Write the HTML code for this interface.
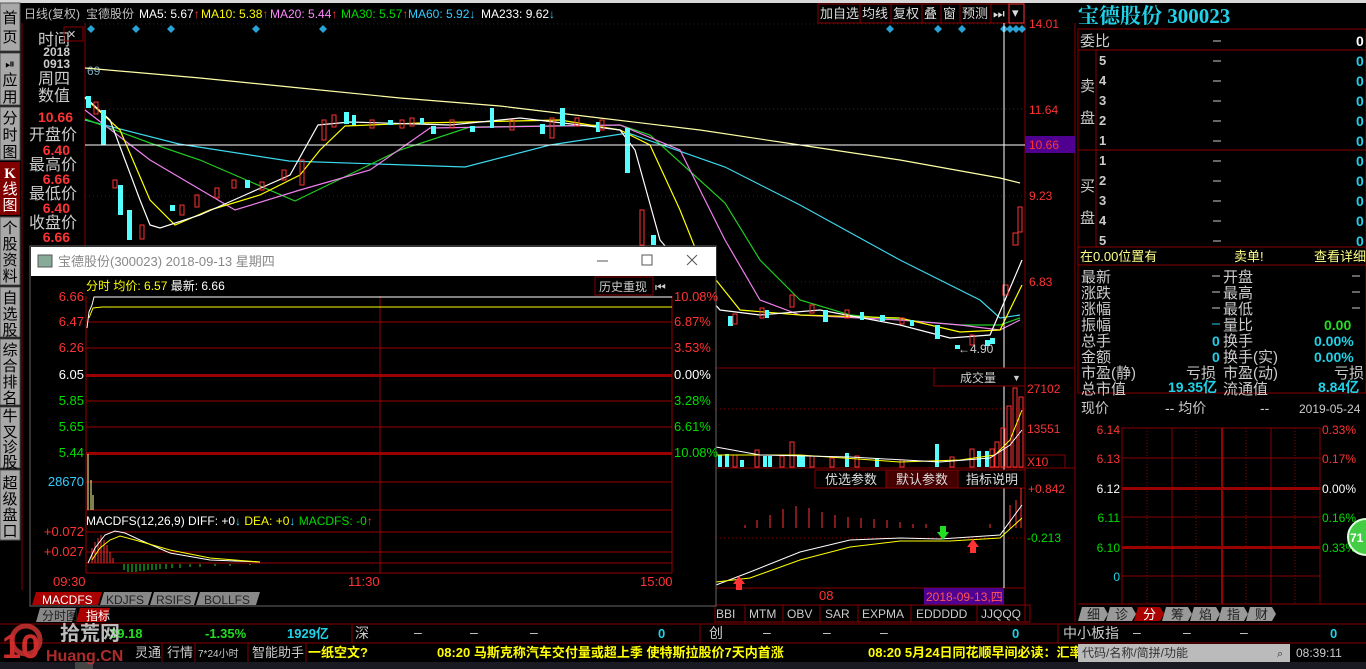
<!DOCTYPE html>
<html><head><meta charset="utf-8"><style>
html,body{margin:0;padding:0;background:#000;overflow:hidden}
svg{display:block;font-family:"Liberation Sans","Noto Sans CJK SC",sans-serif;font-size:13px}
</style></head><body>
<svg width="1366" height="669" viewBox="0 0 1366 669" xmlns="http://www.w3.org/2000/svg">
<rect width="1366" height="669" fill="#000"/>
<rect x="0" y="0" width="1366" height="3" fill="#d8d8d8"/>
<!-- left sidebar -->
<g fill="#a8a8a8" stroke="#555">
<rect x="0" y="3" width="20" height="48"/><rect x="0" y="53" width="20" height="52"/><rect x="0" y="107" width="20" height="53"/>
<rect x="0" y="217" width="20" height="68"/><rect x="0" y="287" width="20" height="50"/><rect x="0" y="339" width="20" height="66"/><rect x="0" y="407" width="20" height="61"/><rect x="0" y="470" width="20" height="70"/>
</g>
<rect x="0" y="162" width="20" height="53" fill="#800000"/>
<g fill="#000" font-size="15" text-anchor="middle">
<text x="10" y="23">首</text><text x="10" y="42">页</text>
<text x="10" y="68" font-size="12">⏯</text><text x="10" y="85">应</text><text x="10" y="102">用</text>
<text x="10" y="123">分</text><text x="10" y="140">时</text><text x="10" y="157">图</text>
<text x="10" y="233">个</text><text x="10" y="249">股</text><text x="10" y="265">资</text><text x="10" y="281">料</text>
<text x="10" y="303">自</text><text x="10" y="319">选</text><text x="10" y="335">股</text>
<text x="10" y="355">综</text><text x="10" y="371">合</text><text x="10" y="387">排</text><text x="10" y="403">名</text>
<text x="10" y="421">牛</text><text x="10" y="437">叉</text><text x="10" y="452">诊</text><text x="10" y="467">股</text>
<text x="10" y="488">超</text><text x="10" y="504">级</text><text x="10" y="520">盘</text><text x="10" y="536">口</text>
</g>
<g fill="#fff" text-anchor="middle" font-size="15"><text x="10" y="178" font-family="Liberation Serif" font-weight="bold">K</text><text x="10" y="194">线</text><text x="10" y="210">图</text></g>
<!-- header -->
<g font-size="12">
<text x="24" y="18" fill="#c0c0c0">日线(复权)</text><text x="86" y="18" fill="#c0c0c0">宝德股份</text>
<text x="139" y="18" fill="#fff">MA5: 5.67<tspan fill="#f33">↑</tspan></text>
<text x="201" y="18" fill="#ff0">MA10: 5.38<tspan fill="#f33">↑</tspan></text>
<text x="270" y="18" fill="#f8f">MA20: 5.44<tspan fill="#f33">↑</tspan></text>
<text x="341" y="18" fill="#0d0">MA30: 5.57<tspan fill="#f33">↑</tspan></text>
<text x="408" y="18" fill="#3cf">MA60: 5.92<tspan fill="#3cf">↓</tspan></text>
<text x="481" y="18" fill="#fff">MA233: 9.62<tspan fill="#3cf">↓</tspan></text>
</g>
<g stroke="#800" fill="none"><rect x="818" y="4" width="42" height="19"/><rect x="860" y="4" width="31" height="19"/><rect x="891" y="4" width="31" height="19"/><rect x="922" y="4" width="19" height="19"/><rect x="941" y="4" width="19" height="19"/><rect x="960" y="4" width="31" height="19"/><rect x="991" y="4" width="18" height="19"/><rect x="1009" y="4" width="15" height="19" stroke="#f33"/></g>
<g fill="#ddd" font-size="13"><text x="820" y="18">加自选</text><text x="862" y="18">均线</text><text x="893" y="18">复权</text><text x="924" y="18">叠</text><text x="943" y="18">窗</text><text x="962" y="18">预测</text><text x="993" y="18">⏭</text><text x="1012" y="17">▾</text></g>
<!-- main chart frame -->
<line x1="22" y1="23" x2="22" y2="590" stroke="#800"/>
<line x1="85" y1="23" x2="85" y2="590" stroke="#800"/>
<line x1="1025" y1="23" x2="1025" y2="622" stroke="#800"/>
<line x1="1075" y1="23" x2="1075" y2="622" stroke="#800"/>
<g stroke="#800" stroke-dasharray="1,3"><line x1="85" y1="24" x2="1025" y2="24"/><line x1="85" y1="109" x2="1025" y2="109"/><line x1="85" y1="196" x2="1025" y2="196"/><line x1="85" y1="282" x2="1025" y2="282"/><line x1="716" y1="409" x2="1025" y2="409"/><line x1="716" y1="538" x2="1025" y2="538"/></g>
<line x1="716" y1="368" x2="1075" y2="368" stroke="#800"/>
<line x1="716" y1="468" x2="1075" y2="468" stroke="#800"/>
<line x1="716" y1="588" x2="1025" y2="588" stroke="#800"/>
<g fill="#29a3d6">
<path d="M91 25l4 4-4 4-4-4z"/><path d="M136 25l4 4-4 4-4-4z"/><path d="M171 25l4 4-4 4-4-4z"/><path d="M256 25l4 4-4 4-4-4z"/><path d="M323 25l4 4-4 4-4-4z"/>
<path d="M890 25l4 4-4 4-4-4z"/><path d="M938 25l4 4-4 4-4-4z"/><path d="M962 25l4 4-4 4-4-4z"/><path d="M1004 25l4 4-4 4-4-4z"/><path d="M1010 25l4 4-4 4-4-4z"/><path d="M1016 25l4 4-4 4-4-4z"/><path d="M1022 25l4 4-4 4-4-4z"/>
</g>
<text x="87" y="75" fill="#7ab" font-size="12">69</text>
<!-- left info column -->
<g text-anchor="end" font-size="16">
<text x="70" y="45" fill="#ccc">时间</text><text x="70" y="56" fill="#ccc" font-size="12" font-weight="bold">2018</text><text x="70" y="68" fill="#ccc" font-size="12" font-weight="bold">0913</text>
<text x="70" y="84" fill="#ccc">周四</text><text x="70" y="101" fill="#ccc">数值</text>
<text x="73" y="122" fill="#f33" font-size="14" font-weight="bold">10.66</text>
<text x="77" y="140" fill="#ccc">开盘价</text><text x="70" y="155" fill="#f33" font-size="14" font-weight="bold">6.40</text>
<text x="77" y="170" fill="#ccc">最高价</text><text x="70" y="184" fill="#f33" font-size="14" font-weight="bold">6.66</text>
<text x="77" y="199" fill="#ccc">最低价</text><text x="70" y="213" fill="#f33" font-size="14" font-weight="bold">6.40</text>
<text x="77" y="228" fill="#ccc">收盘价</text><text x="70" y="242" fill="#f33" font-size="14" font-weight="bold">6.66</text>
</g>
<rect x="64" y="27" width="19" height="14" fill="none" stroke="#800"/><text x="67" y="38" fill="#ccc" font-size="11">✕</text>
<!-- MA lines -->
<g fill="none" stroke-width="1.2">
<polyline stroke="#ffffa8" points="85,68 200,78 300,88 400,98 500,106 600,118 700,130 800,145 900,160 1000,178 1020,183"/>
<polyline stroke="#3cd8ec" points="85,120 179,144 289,161 465,167 550,145 628,133 725,167 800,205 900,260 980,300 1000,318 1020,315"/>
<polyline stroke="#22cc22" points="85,119 150,143 200,160 295,201 400,150 470,127 620,125 650,135 725,203 760,260 800,300 850,315 960,325 1000,325 1020,318"/>
<polyline stroke="#f080f0" points="85,110 150,160 235,210 300,190 370,170 430,128 620,125 680,150 725,240 760,300 800,315 900,320 960,325 1000,330 1020,320"/>
<polyline stroke="#ffff00" points="85,98 120,130 150,200 175,225 210,210 260,195 300,175 320,150 345,126 420,123 560,120 620,130 650,145 680,210 700,260 740,310 800,315 900,318 960,332 1000,330 1022,285"/>
<polyline stroke="#fff" points="85,97 110,120 140,200 150,225 160,228 200,215 245,195 290,175 318,125 350,122 450,125 520,118 580,125 620,130 635,150 660,240 720,310 760,315 820,310 900,325 950,338 990,335 1005,300 1022,260"/>
</g>
<g fill="#5ff">
<rect x="86" y="96" width="5" height="12"/><rect x="101" y="110" width="5" height="35"/><rect x="118" y="185" width="5" height="30"/><rect x="127" y="210" width="5" height="30"/><rect x="170" y="205" width="5" height="6"/><rect x="245" y="180" width="5" height="8"/><rect x="344" y="112" width="5" height="12"/><rect x="388" y="120" width="5" height="5"/><rect x="431" y="126" width="5" height="8"/><rect x="470" y="126" width="5" height="6"/><rect x="540" y="124" width="5" height="10"/><rect x="560" y="108" width="5" height="18"/><rect x="625" y="128" width="5" height="45"/><rect x="651" y="235" width="5" height="10"/><rect x="728" y="316" width="5" height="10"/><rect x="823" y="310" width="5" height="12"/><rect x="880" y="315" width="5" height="6"/><rect x="935" y="325" width="5" height="14"/><rect x="955" y="345" width="5" height="4"/><rect x="985" y="340" width="5" height="6"/><rect x="990" y="338" width="5" height="6"/>
<rect x="352" y="115" width="4" height="10"/><rect x="420" y="118" width="4" height="6"/><rect x="490" y="108" width="4" height="20"/><rect x="596" y="122" width="4" height="10"/><rect x="765" y="310" width="4" height="8"/><rect x="860" y="312" width="4" height="8"/><rect x="910" y="320" width="4" height="6"/></g>
<g fill="none" stroke="#f33">
<rect x="94" y="102" width="4" height="12"/><rect x="113" y="180" width="4" height="8"/><rect x="140" y="225" width="4" height="14"/><rect x="180" y="205" width="4" height="10"/><rect x="195" y="195" width="4" height="12"/><rect x="215" y="188" width="4" height="10"/><rect x="232" y="180" width="4" height="8"/><rect x="300" y="160" width="4" height="25"/><rect x="322" y="120" width="4" height="20"/><rect x="332" y="115" width="4" height="12"/><rect x="370" y="120" width="4" height="8"/><rect x="400" y="120" width="4" height="8"/><rect x="450" y="120" width="4" height="8"/><rect x="510" y="120" width="4" height="10"/><rect x="550" y="118" width="4" height="20"/><rect x="575" y="118" width="4" height="8"/><rect x="640" y="210" width="4" height="35"/><rect x="733" y="314" width="4" height="10"/><rect x="760" y="308" width="4" height="10"/><rect x="790" y="295" width="4" height="12"/><rect x="810" y="305" width="4" height="8"/><rect x="845" y="310" width="4" height="8"/><rect x="900" y="318" width="4" height="6"/><rect x="970" y="335" width="4" height="10"/><rect x="1003" y="285" width="5" height="10"/><rect x="1013" y="233" width="5" height="12"/><rect x="1018" y="207" width="4" height="25"/>
<rect x="260" y="182" width="4" height="8"/><rect x="282" y="170" width="4" height="10"/><rect x="410" y="118" width="4" height="8"/><rect x="600" y="120" width="4" height="10"/></g>
<text x="958" y="353" fill="#ccc" font-size="12">←4.90</text>
<line x1="85" y1="145" x2="1025" y2="145" stroke="#fff"/>
<line x1="1004" y1="23" x2="1004" y2="588" stroke="#fff"/>
<g fill="#f33" font-size="12"><text x="1029" y="28">14.01</text><text x="1029" y="114">11.64</text><text x="1029" y="200">9.23</text><text x="1029" y="286">6.83</text><text x="1027" y="393">27102</text><text x="1027" y="433">13551</text><text x="1027" y="466">X10</text><text x="1028" y="493">+0.842</text></g>
<rect x="1025" y="136" width="50" height="17" fill="#500090"/><text x="1029" y="149" fill="#f33" font-size="12">10.66</text>
<text x="1027" y="542" fill="#0d0" font-size="12">-0.213</text>
<!-- volume pane -->
<rect x="934" y="368" width="91" height="18" fill="#000" stroke="#800"/><text x="960" y="382" fill="#ccc" font-size="12">成交量</text><text x="1012" y="381" fill="#ccc" font-size="9">▼</text>
<rect x="1025" y="455" width="40" height="13" fill="none" stroke="#800"/>
<g fill="#5ff"><rect x="718" y="455" width="4" height="12"/><rect x="725" y="454" width="4" height="13"/><rect x="740" y="460" width="4" height="7"/><rect x="763" y="456" width="4" height="11"/><rect x="768" y="456" width="4" height="11"/><rect x="797" y="455" width="4" height="12"/><rect x="801" y="455" width="4" height="12"/><rect x="845" y="453" width="4" height="14"/><rect x="875" y="458" width="4" height="9"/><rect x="935" y="444" width="4" height="23"/><rect x="977" y="451" width="4" height="16"/><rect x="985" y="451" width="4" height="16"/></g>
<g fill="none" stroke="#f33"><rect x="733" y="455" width="4" height="12"/><rect x="755" y="450" width="4" height="17"/><rect x="780" y="456" width="4" height="11"/><rect x="790" y="442" width="4" height="25"/><rect x="810" y="456" width="4" height="11"/><rect x="830" y="458" width="4" height="9"/><rect x="855" y="456" width="4" height="11"/><rect x="900" y="460" width="4" height="7"/><rect x="950" y="457" width="4" height="10"/><rect x="970" y="449" width="4" height="18"/><rect x="990" y="449" width="4" height="18"/><rect x="995" y="442" width="4" height="25"/><rect x="1001" y="428" width="4" height="39"/><rect x="1007" y="406" width="4" height="61"/><rect x="1013" y="388" width="4" height="79"/><rect x="1019" y="397" width="4" height="70"/></g>
<polyline fill="none" stroke="#ff0" points="716,455 760,455 800,455 900,462 960,460 995,455 1010,440 1022,410"/>
<polyline fill="none" stroke="#fff" points="716,447 760,455 850,457 940,462 990,458 1010,445 1022,430"/>
<!-- macd pane -->
<g stroke="#800" fill="#000"><rect x="815" y="470" width="71" height="18"/><rect x="886" y="470" width="72" height="18" fill="#400"/><rect x="958" y="470" width="67" height="18"/></g>
<g fill="#ddd" font-size="13"><text x="825" y="484">优选参数</text><text x="896" y="484">默认参数</text><text x="966" y="484">指标说明</text></g>
<g stroke="#f33"><line x1="745" y1="525" x2="745" y2="528"/><line x1="757" y1="520" x2="757" y2="528"/><line x1="770" y1="515" x2="770" y2="528"/><line x1="783" y1="509" x2="783" y2="528"/><line x1="796" y1="506" x2="796" y2="528"/><line x1="809" y1="508" x2="809" y2="528"/><line x1="822" y1="512" x2="822" y2="528"/><line x1="835" y1="515" x2="835" y2="528"/><line x1="848" y1="517" x2="848" y2="528"/><line x1="861" y1="518" x2="861" y2="528"/><line x1="874" y1="519" x2="874" y2="528"/><line x1="887" y1="520" x2="887" y2="528"/><line x1="900" y1="522" x2="900" y2="528"/><line x1="913" y1="524" x2="913" y2="528"/><line x1="926" y1="524" x2="926" y2="528"/><line x1="990" y1="524" x2="990" y2="528"/><line x1="1010" y1="505" x2="1010" y2="528"/><line x1="1016" y1="500" x2="1016" y2="528"/><line x1="1021" y1="488" x2="1021" y2="528"/></g>
<polyline fill="none" stroke="#fff" points="716,585 750,572 800,552 850,540 900,538 940,539 1000,535 1022,505"/>
<polyline fill="none" stroke="#ff0" points="716,582 750,578 800,560 850,547 900,541 950,541 1000,538 1022,518"/>
<path d="M940 526h6v6h3l-6 8-6-8h3z" fill="#2d2"/>
<path d="M970 553h6v-6h3l-6-8-6 8h3z" fill="#f33"/>
<path d="M736 590h6v-6h3l-6-8-6 8h3z" fill="#f33"/>
<text x="819" y="600" fill="#f33" font-size="13">08</text>
<rect x="924" y="588" width="80" height="17" fill="#500090"/><text x="926" y="601" fill="#f55" font-size="12">2018-09-13,四</text>
<g stroke="#800" fill="none"><rect x="715" y="605" width="30" height="17"/><rect x="745" y="605" width="38" height="17"/><rect x="783" y="605" width="37" height="17"/><rect x="820" y="605" width="38" height="17"/><rect x="858" y="605" width="53" height="17"/><rect x="911" y="605" width="66" height="17"/><rect x="977" y="605" width="53" height="17"/></g>
<g fill="#ccc" font-size="12"><text x="716" y="618">BBI</text><text x="749" y="618">MTM</text><text x="787" y="618">OBV</text><text x="825" y="618">SAR</text><text x="862" y="618">EXPMA</text><text x="916" y="618">EDDDDD</text><text x="981" y="618">JJQQQ</text></g>
<!-- popup window -->
<rect x="30" y="246" width="686" height="360" fill="#000" stroke="#666"/>
<rect x="31" y="247" width="685" height="29" fill="#fff"/>
<rect x="38" y="255" width="14" height="12" fill="#8a9" stroke="#555"/>
<text x="58" y="266" fill="#888" font-size="13">宝德股份(300023) 2018-09-13 星期四</text>
<line x1="597" y1="261" x2="608" y2="261" stroke="#555"/><rect x="642" y="255" width="10" height="10" fill="none" stroke="#555"/><path d="M687 255l10 10M697 255l-10 10" stroke="#555"/>
<text x="86" y="290" font-size="12"><tspan fill="#ff0">分时 均价: </tspan><tspan fill="#ff0">6.57 </tspan><tspan fill="#fff">最新: 6.66</tspan></text>
<rect x="595" y="277" width="58" height="18" fill="none" stroke="#800"/><text x="599" y="291" fill="#ccc" font-size="12">历史重现</text><text x="655" y="291" fill="#ccc" font-size="12">⏮</text>
<g stroke="#900"><line x1="86" y1="322" x2="672" y2="322"/><line x1="86" y1="348" x2="672" y2="348"/><line x1="86" y1="401" x2="672" y2="401"/><line x1="86" y1="427" x2="672" y2="427"/><line x1="86" y1="482" x2="672" y2="482"/><line x1="86" y1="510" x2="672" y2="510"/><line x1="86" y1="532" x2="672" y2="532"/><line x1="86" y1="552" x2="672" y2="552"/><line x1="86" y1="563" x2="672" y2="563"/><line x1="86" y1="573" x2="672" y2="573"/><line x1="86" y1="296" x2="86" y2="573"/><line x1="672" y1="296" x2="672" y2="573"/><line x1="380" y1="296" x2="380" y2="573"/></g>
<rect x="86" y="374" width="586" height="3" fill="#900"/><rect x="86" y="452" width="586" height="3" fill="#900"/>
<polyline fill="none" stroke="#fff" points="87,328 89,312 92,305 94,297 672,297"/>
<polyline fill="none" stroke="#ff0" points="89,318 93,308 102,307 672,307"/>
<g stroke="#ff9"><line x1="88" y1="454" x2="88" y2="510"/><line x1="91" y1="480" x2="91" y2="510"/><line x1="93" y1="495" x2="93" y2="510"/></g>
<g fill="#f33" font-size="13" text-anchor="end"><text x="84" y="301">6.66</text><text x="84" y="326">6.47</text><text x="84" y="352">6.26</text><text x="84" y="536">+0.072</text><text x="84" y="556">+0.027</text></g>
<text x="84" y="379" fill="#fff" font-size="13" text-anchor="end">6.05</text>
<g fill="#0d0" font-size="13" text-anchor="end"><text x="84" y="405">5.85</text><text x="84" y="431">5.65</text><text x="84" y="457">5.44</text></g>
<text x="84" y="486" fill="#3cf" font-size="13" text-anchor="end">28670</text>
<g font-size="13"><text x="674" y="301" fill="#f33">10.08%</text><text x="674" y="326" fill="#f33">6.87%</text><text x="674" y="352" fill="#f33">3.53%</text><text x="674" y="379" fill="#fff">0.00%</text><text x="674" y="405" fill="#0d0">3.28%</text><text x="674" y="431" fill="#0d0">6.61%</text><text x="674" y="457" fill="#0d0">10.08%</text></g>
<text x="86" y="525" font-size="12"><tspan fill="#fff">MACDFS(12,26,9) DIFF: +0</tspan><tspan fill="#3cf">↓</tspan><tspan fill="#ff0"> DEA: +0</tspan><tspan fill="#3cf">↓</tspan><tspan fill="#0d0"> MACDFS: -0</tspan><tspan fill="#f33">↑</tspan></text>
<g stroke="#f33"><line x1="92" y1="548" x2="92" y2="563"/><line x1="95" y1="542" x2="95" y2="563"/><line x1="98" y1="538" x2="98" y2="563"/><line x1="101" y1="535" x2="101" y2="563"/><line x1="104" y1="540" x2="104" y2="563"/><line x1="107" y1="545" x2="107" y2="563"/><line x1="110" y1="552" x2="110" y2="563"/><line x1="113" y1="558" x2="113" y2="563"/></g>
<path d="M124 564v6M128 564v8M132 564v8M136 564v8M140 564v7M144 564v7M148 564v6M152 564v6M156 564v6M160 564v5M166 564v5M172 564v4M180 564v4M190 564v3M200 564v3M215 564v2M230 564v2M250 564v1" stroke="#2d2"/>
<polyline fill="none" stroke="#fff" points="88,563 95,548 105,535 115,531 125,533 140,540 170,553 210,560 260,562"/>
<polyline fill="none" stroke="#ff0" points="92,560 100,548 110,540 120,536 135,540 170,550 210,558 260,562"/>
<g fill="#f33" font-size="13"><text x="53" y="586">09:30</text><text x="348" y="586">11:30</text><text x="640" y="586">15:00</text></g>
<path d="M36 592h66l-4 13h-66z" fill="#a00"/><path d="M104 592h48l-4 13h-48z" fill="#888"/><path d="M154 592h44l-4 13h-44z" fill="#888"/><path d="M200 592h60l-4 13h-60z" fill="#888"/>
<g font-size="12"><text x="42" y="604" fill="#fff">MACDFS</text><text x="106" y="604" fill="#222">KDJFS</text><text x="156" y="604" fill="#222">RSIFS</text><text x="204" y="604" fill="#222">BOLLFS</text></g>
<path d="M40 608h36l-4 14h-36z" fill="#888"/><path d="M80 608h30l-4 14h-30z" fill="#a00"/>
<text x="42" y="620" fill="#222" font-size="12">分时图</text><text x="86" y="620" fill="#fff" font-size="12">指标</text>
<!-- right panel -->
<text x="1078" y="23" fill="#1fd2e8" font-size="21" font-weight="bold" font-family="'Liberation Serif','Noto Serif CJK SC',serif">宝德股份 300023</text>
<g stroke="#800" fill="none"><rect x="1078" y="29" width="288" height="364"/><line x1="1078" y1="50" x2="1366" y2="50"/><line x1="1078" y1="150" x2="1366" y2="150"/><line x1="1078" y1="247" x2="1366" y2="247"/><line x1="1078" y1="265" x2="1366" y2="265"/><line x1="1096" y1="50" x2="1096" y2="247"/></g>
<g fill="#ccc" font-size="15"><text x="1080" y="46">委比</text><text x="1080" y="91">卖</text><text x="1080" y="123">盘</text><text x="1080" y="191">买</text><text x="1080" y="223">盘</text></g>
<g fill="#ccc" font-size="13" font-weight="bold"><text x="1099" y="65">5</text><text x="1099" y="85">4</text><text x="1099" y="105">3</text><text x="1099" y="125">2</text><text x="1099" y="145">1</text><text x="1099" y="165">1</text><text x="1099" y="185">2</text><text x="1099" y="205">3</text><text x="1099" y="225">4</text><text x="1099" y="245">5</text></g>
<g stroke="#ccc"><path d="M1213 41h8M1213 61h8M1213 81h8M1213 101h8M1213 121h8M1213 141h8M1213 161h8M1213 181h8M1213 201h8M1213 221h8M1213 241h8"/></g>
<text x="1356" y="46" fill="#fff" font-size="14" font-weight="bold">0</text>
<g fill="#1fd2e8" font-size="14" font-weight="bold"><text x="1356" y="66">0</text><text x="1356" y="86">0</text><text x="1356" y="106">0</text><text x="1356" y="126">0</text><text x="1356" y="146">0</text><text x="1356" y="166">0</text><text x="1356" y="186">0</text><text x="1356" y="206">0</text><text x="1356" y="226">0</text><text x="1356" y="246">0</text></g>
<g fill="#ff8" font-size="13"><text x="1080" y="261">在0.00位置有</text><text x="1234" y="261">卖单!</text><text x="1314" y="261">查看详细</text></g>
<g fill="#ccc" font-size="15"><text x="1081" y="282">最新</text><text x="1081" y="298">涨跌</text><text x="1081" y="314">涨幅</text><text x="1081" y="330">振幅</text><text x="1081" y="346">总手</text><text x="1081" y="362">金额</text><text x="1081" y="378">市盈(静)</text><text x="1081" y="394">总市值</text>
<text x="1223" y="282">开盘</text><text x="1223" y="298">最高</text><text x="1223" y="314">最低</text><text x="1223" y="330">量比</text><text x="1223" y="346">换手</text><text x="1223" y="362">换手(实)</text><text x="1223" y="378">市盈(动)</text><text x="1223" y="394">流通值</text>
<text x="1186" y="378">亏损</text><text x="1334" y="378">亏损</text></g>
<g stroke="#ccc"><path d="M1212 276h8M1212 292h8M1212 308h8M1352 276h8M1352 292h8M1352 308h8"/></g><path d="M1212 324h8" stroke="#1fd2e8"/>
<g fill="#1fd2e8" font-size="14" font-weight="bold"><text x="1212" y="346">0</text><text x="1212" y="362">0</text><text x="1314" y="346">0.00%</text><text x="1314" y="362">0.00%</text><text x="1168" y="392">19.35亿</text><text x="1318" y="392">8.84亿</text></g>
<text x="1324" y="330" fill="#2d2" font-size="14" font-weight="bold">0.00</text>
<g fill="#ccc" font-size="14"><text x="1081" y="413">现价</text><text x="1165" y="413">-- 均价</text><text x="1260" y="413">--</text><text x="1299" y="413" font-size="12">2019-05-24</text></g>
<g stroke="#800" fill="none"><rect x="1122" y="428" width="198" height="176"/><line x1="1122" y1="458" x2="1320" y2="458"/><line x1="1122" y1="517" x2="1320" y2="517"/><line x1="1122" y1="576" x2="1320" y2="576"/><line x1="1172" y1="428" x2="1172" y2="604"/><line x1="1271" y1="428" x2="1271" y2="604"/></g>
<g stroke="#800" stroke-dasharray="1,2"><line x1="1147" y1="428" x2="1147" y2="604"/><line x1="1196" y1="428" x2="1196" y2="604"/><line x1="1246" y1="428" x2="1246" y2="604"/><line x1="1295" y1="428" x2="1295" y2="604"/></g>
<rect x="1122" y="487" width="198" height="3" fill="#900"/><rect x="1122" y="546" width="198" height="3" fill="#900"/><rect x="1221" y="428" width="2" height="176" fill="#900"/>
<line x1="1078" y1="604" x2="1366" y2="604" stroke="#800"/>
<g font-size="12" text-anchor="end"><text x="1120" y="434" fill="#f33">6.14</text><text x="1120" y="463" fill="#f33">6.13</text><text x="1120" y="493" fill="#fff">6.12</text><text x="1120" y="522" fill="#0d0">6.11</text><text x="1120" y="552" fill="#0d0">6.10</text><text x="1120" y="581" fill="#1fd2e8">0</text></g>
<g font-size="12"><text x="1322" y="434" fill="#f33">0.33%</text><text x="1322" y="463" fill="#f33">0.17%</text><text x="1322" y="493" fill="#fff">0.00%</text><text x="1322" y="522" fill="#0d0">0.16%</text><text x="1322" y="552" fill="#0d0">0.33%</text></g>
<circle cx="1366" cy="537" r="18" fill="#4c4" stroke="#dfd" stroke-width="2"/><text x="1350" y="542" fill="#fff" font-size="12" font-weight="bold">71</text>
<g fill="#999"><path d="M1082 607h22l4 7-4 7h-26z"/><path d="M1110 607h22l4 7-4 7h-26z"/><path d="M1166 607h22l4 7-4 7h-26z"/><path d="M1194 607h22l4 7-4 7h-26z"/><path d="M1222 607h22l4 7-4 7h-26z"/><path d="M1250 607h22l4 7-4 7h-26z"/></g>
<path d="M1138 607h22l4 7-4 7h-26z" fill="#a00"/>
<g font-size="13"><text x="1087" y="619" fill="#222">细</text><text x="1115" y="619" fill="#222">诊</text><text x="1143" y="619" fill="#fff">分</text><text x="1171" y="619" fill="#222">筹</text><text x="1199" y="619" fill="#222">焰</text><text x="1227" y="619" fill="#222">指</text><text x="1255" y="619" fill="#222">财</text></g>
<!-- index row -->
<line x1="0" y1="624" x2="1366" y2="624" stroke="#800"/><line x1="0" y1="643" x2="1366" y2="643" stroke="#800"/>
<g font-size="13" font-weight="bold"><text x="110" y="638" fill="#2d2">39.18</text><text x="205" y="638" fill="#2d2">-1.35%</text><text x="287" y="638" fill="#1fd2e8">1929亿</text><text x="658" y="638" fill="#1fd2e8">0</text><text x="1012" y="638" fill="#1fd2e8">0</text><text x="1330" y="638" fill="#1fd2e8">0</text></g>
<g stroke="#800"><line x1="352" y1="625" x2="352" y2="643"/><line x1="700" y1="625" x2="700" y2="643"/><line x1="1058" y1="625" x2="1058" y2="643"/></g>
<g fill="#ccc" font-size="14"><text x="355" y="638">深</text><text x="709" y="638">创</text><text x="1063" y="638">中小板指</text><text x="414" y="637">–</text><text x="470" y="637">–</text><text x="530" y="637">–</text><text x="763" y="637">–</text><text x="823" y="637">–</text><text x="880" y="637">–</text><text x="1133" y="637">–</text><text x="1183" y="637">–</text><text x="1240" y="637">–</text></g>
<!-- news bar -->
<g stroke="#800"><line x1="162" y1="643" x2="162" y2="662"/><line x1="195" y1="643" x2="195" y2="662"/><line x1="248" y1="643" x2="248" y2="662"/><line x1="306" y1="643" x2="306" y2="662"/></g>
<g fill="#ccc" font-size="13"><text x="135" y="657">灵通</text><text x="167" y="657">行情</text><text x="198" y="657" font-size="10">7*24小时</text><text x="252" y="657">智能助手</text></g>
<g fill="#ff0" font-size="13" font-weight="bold"><text x="308" y="657">一纸空文?</text><text x="437" y="657">08:20 马斯克称汽车交付量或超上季 使特斯拉股价7天内首涨</text><text x="868" y="657">08:20 5月24日同花顺早间必读：汇率市</text></g>
<rect x="1078" y="644" width="212" height="18" fill="#bbb"/><text x="1082" y="657" fill="#333" font-size="12">代码/名称/简拼/功能</text><text x="1277" y="657" fill="#333" font-size="11">⌕</text>
<text x="1296" y="657" fill="#ccc" font-size="12">08:39:11</text>
<rect x="0" y="662" width="1366" height="7" fill="#1a1a22"/><rect x="75" y="662" width="18" height="7" fill="#444"/>
<!-- watermark -->
<g opacity="0.85"><circle cx="26" cy="640" r="14" fill="none" stroke="#c33" stroke-width="5"/><text x="2" y="658" fill="#e33" font-size="34" font-weight="bold">10</text>
<text x="60" y="640" fill="#ddd" font-size="20" font-weight="bold">拾荒网</text><text x="46" y="661" fill="#c33" font-size="16" font-weight="bold">Huang.CN</text></g>
</svg>
</body></html>
